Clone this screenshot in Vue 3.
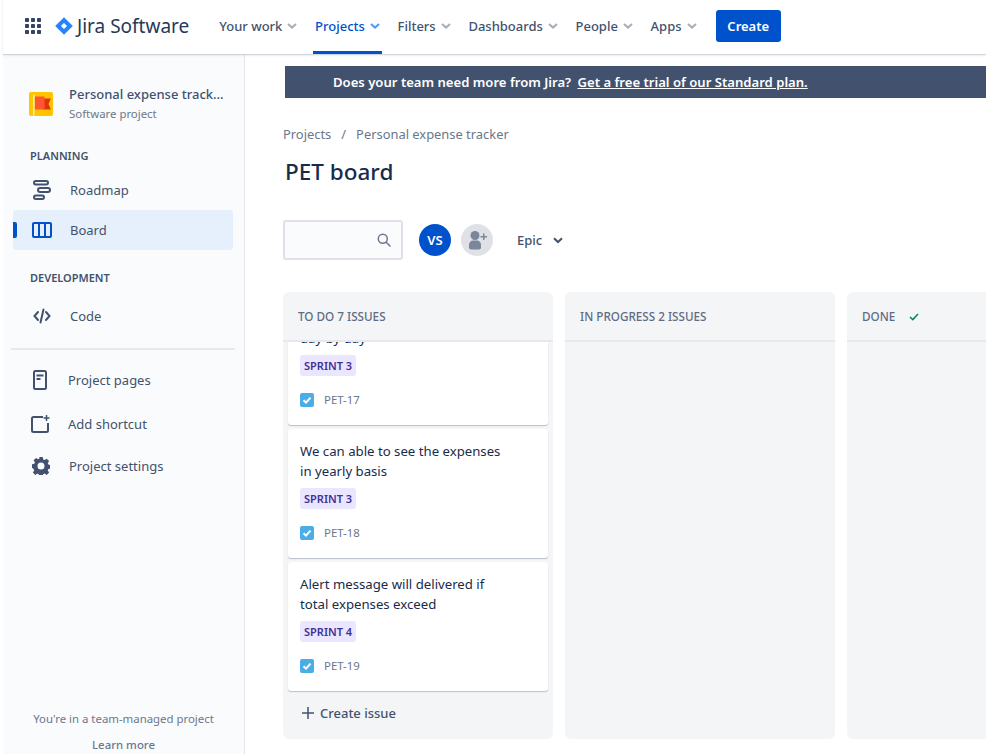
<template>
  <div class="page">
    <header class="topbar">
      <svg class="apps-icon" width="16" height="16" viewBox="0 0 16 16">
        <g fill="#344563">
          <template v-for="y in [0, 6, 12]" :key="y">
            <rect v-for="x in [0, 6, 12]" :key="x" :x="x" :y="y" width="4" height="4" rx="0.8" />
          </template>
        </g>
      </svg>
      <div class="logo">
        <svg width="18" height="18" viewBox="0 0 18 18">
          <path fill="#2684FF" d="M9 0.2 17.8 9 9 17.8 0.2 9Z" />
          <path fill="#fff" d="M9 5.9 12.1 9 9 12.1 5.9 9Z" />
        </svg>
        <span>Jira Software</span>
      </div>
      <nav class="nav">
        <a v-for="item in navItems" :key="item" class="nav-item" :class="{ active: item === 'Projects' }">
          {{ item }}
          <svg width="10" height="6" viewBox="0 0 10 6"><path d="M1 1 5 4.6 9 1" fill="none" stroke-width="2" /></svg>
        </a>
      </nav>
      <button class="create-btn">Create</button>
    </header>

    <div class="content">
      <aside class="sidebar">
        <div class="project">
          <svg width="24" height="24" viewBox="0 0 24 24">
            <rect width="24" height="24" rx="2" fill="#FFC400" />
            <rect x="4" y="2.500" width="1.500" height="21.500" fill="#DEEBE6" />
            <path fill="#DE350B" d="M14 6.500h8l-2.500 5.500 2.500 5.500H14Z" />
            <path fill="#FF5630" d="M6 4.500h9.500v13H6Z" />
          </svg>
          <div class="project-text">
            <div class="project-name">Personal expense track...</div>
            <div class="project-type">Software project</div>
          </div>
        </div>

        <div class="group-title planning">PLANNING</div>
        <a class="side-link roadmap">
          <svg width="20" height="20" viewBox="0 0 20 20" fill="none" stroke="#42526E" stroke-width="2">
            <rect x="1" y="1" width="14" height="3.500" rx="1.750" />
            <rect x="5" y="8" width="12" height="4" rx="2" />
            <rect x="1" y="15.500" width="10" height="3.500" rx="1.750" />
          </svg>
          <span>Roadmap</span>
        </a>
        <a class="side-link current">
          <svg width="20" height="16" viewBox="0 0 20 16" fill="none" stroke="#0052CC" stroke-width="2">
            <rect x="1" y="1" width="18" height="14" rx="1" />
            <path d="M7 1v14M13 1v14" />
          </svg>
          <span>Board</span>
        </a>

        <div class="group-title development">DEVELOPMENT</div>
        <a class="side-link code">
          <svg width="18" height="16" viewBox="0 0 18 16" fill="none" stroke="#42526E" stroke-width="2" stroke-linecap="round">
            <path d="M5 4 1.500 8 5 12M13 4l3.500 4-3.500 4M10.500 1.500 7.500 14.500" />
          </svg>
          <span>Code</span>
        </a>

        <div class="divider"></div>

        <a class="side-link small pages">
          <svg width="14" height="20" viewBox="0 0 14 20" fill="none">
            <rect x="1" y="1" width="12" height="18" rx="1.500" stroke="#42526E" stroke-width="2" />
            <path d="M3.500 4.500h7v2h-7ZM3.500 8h4v2h-4Z" fill="#42526E" />
          </svg>
          <span>Project pages</span>
        </a>
        <a class="side-link small shortcut">
          <svg width="19" height="19" viewBox="0 0 19 19" fill="none" stroke="#42526E" stroke-width="2">
            <path d="M12 2H2.500A1.500 1.500 0 0 0 1 3.500v12A1.500 1.500 0 0 0 2.500 17h13a1.500 1.500 0 0 0 1.500-1.500V8" />
            <path d="M15.500 0v6M12.500 3h6" stroke-width="1.500" />
          </svg>
          <span>Add shortcut</span>
        </a>
        <a class="side-link small settings">
          <svg width="18" height="18" viewBox="0 0 18 18">
            <path fill="#42526E" fill-rule="evenodd" d="M7.300 0h3.400l.5 2.400 1.400.6 2.100-1.300 2.400 2.400-1.300 2.100.6 1.400 2.400.5v3.400l-2.400.5-.6 1.400 1.300 2.100-2.400 2.400-2.100-1.300-1.400.6-.5 2.400H7.300l-.5-2.400-1.400-.6-2.100 1.300-2.400-2.400 1.300-2.100-.6-1.400L-.1 10.700V7.300l2.400-.5.6-1.400-1.300-2.100 2.400-2.400 2.100 1.300 1.400-.6ZM9 5.500a3.500 3.500 0 1 0 0 7 3.500 3.500 0 0 0 0-7Z" />
          </svg>
          <span>Project settings</span>
        </a>

        <div class="side-foot">
          <p>You're in a team-managed project</p>
          <a>Learn more</a>
        </div>
      </aside>

      <main class="main">
        <div class="banner">
          Does your team need more from Jira?
          <a>Get a free trial of our Standard plan.</a>
        </div>

        <div class="crumbs">
          <a>Projects</a><span class="slash">/</span><a>Personal expense tracker</a>
        </div>
        <h1>PET board</h1>

        <div class="filters">
          <div class="search">
            <svg width="14" height="14" viewBox="0 0 14 14" fill="none" stroke="#6B778C" stroke-width="1.500">
              <circle cx="5.800" cy="5.800" r="4.500" />
              <path d="M9.200 9.200 13 13" stroke-linecap="round" />
            </svg>
          </div>
          <div class="avatar">VS</div>
          <div class="avatar add">
            <svg width="22" height="22" viewBox="0 0 22 22" fill="#7A869A">
              <circle cx="9" cy="6.500" r="4.500" />
              <path d="M3 16c0-3 2-4.500 4-4.500h4c2 0 4 1.500 4 4.500v2.500a2 2 0 0 1-2 2H5a2 2 0 0 1-2-2Z" />
              <path d="M17 4.500h1.500V7H21v1.500h-2.500V11H17V8.500h-2.500V7H17Z" />
            </svg>
          </div>
          <div class="epic">
            Epic
            <svg width="10" height="7" viewBox="0 0 10 7"><path d="M1 1.200 5 5 9 1.200" fill="none" stroke="#42526E" stroke-width="2" /></svg>
          </div>
        </div>

        <section class="board">
          <div class="column">
            <div class="col-head">TO DO 7 ISSUES</div>
            <div class="cards">
              <article v-for="card in cards" :key="card.key" class="card">
                <p class="summary">{{ card.line1 }}<br />{{ card.line2 }}</p>
                <span class="tag">{{ card.sprint }}</span>
                <div class="issue-key">
                  <svg width="14" height="14" viewBox="0 0 14 14">
                    <rect width="14" height="14" rx="2" fill="#4BADE8" />
                    <path d="M3.500 7.200 6 9.600 10.500 4.600" fill="none" stroke="#fff" stroke-width="2" />
                  </svg>
                  <span>{{ card.key }}</span>
                </div>
              </article>
            </div>
            <div class="create-issue">
              <svg width="12" height="12" viewBox="0 0 12 12"><path d="M6 0v12M0 6h12" stroke="#42526E" stroke-width="1.500" /></svg>
              Create issue
            </div>
          </div>
          <div class="column">
            <div class="col-head">IN PROGRESS 2 ISSUES</div>
          </div>
          <div class="column">
            <div class="col-head">
              DONE
              <svg class="done-check" width="10" height="8" viewBox="0 0 10 8"><path d="M1 4 3.800 6.600 9 1" fill="none" stroke="#00875A" stroke-width="1.500" /></svg>
            </div>
          </div>
        </section>
      </main>
    </div>
  </div>
</template>

<script setup>
const navItems = ['Your work', 'Projects', 'Filters', 'Dashboards', 'People', 'Apps']

const cards = [
  { key: 'PET-17', sprint: 'SPRINT 3', line1: 'We can able to see the expenses', line2: 'day by day' },
  { key: 'PET-18', sprint: 'SPRINT 3', line1: 'We can able to see the expenses', line2: 'in yearly basis' },
  { key: 'PET-19', sprint: 'SPRINT 4', line1: 'Alert message will delivered if', line2: 'total expenses exceed' }
]
</script>

<style>
html, body {
  margin: 0;
  background: #fff;
  overflow: hidden;
}
</style>

<style scoped>
.page {
  width: 986px;
  height: 754px;
  box-sizing: border-box;
  padding-left: 3px;
  overflow: hidden;
  display: flex;
  flex-direction: column;
  font-family: "Noto Sans", "Open Sans", sans-serif;
  font-size: 13px;
  color: #42526E;
}

.topbar {
  position: relative;
  z-index: 2;
  flex: 0 0 54px;
  display: flex;
  align-items: center;
  padding-left: 22px;
  background: #fff;
  box-shadow: 0 1px 1px rgba(9, 30, 66, 0.14), 0 2px 3px rgba(9, 30, 66, 0.05);
}

.apps-icon {
  margin-bottom: 2px;
}

.logo {
  display: flex;
  align-items: center;
  gap: 4px;
  margin-left: 14px;
  margin-bottom: 2px;
  font-size: 19px;
  color: #253858;
}

.nav {
  display: flex;
  height: 100%;
  margin-left: 28px;
}

.nav-item {
  display: flex;
  align-items: center;
  gap: 5px;
  padding: 0 2px;
  margin-right: 13.700px;
  box-sizing: border-box;
  border-bottom: 3px solid transparent;
  font-weight: 500;
  color: #42526E;
  stroke: #A5ADBA;
}

.nav-item.active {
  color: #0052CC;
  stroke: #4C9AFF;
  border-bottom-color: #0052CC;
}

.create-btn {
  width: 65px;
  height: 32px;
  margin-left: 3.500px;
  margin-bottom: 2px;
  border: none;
  border-radius: 3px;
  background: #0052CC;
  color: #fff;
  font: 600 13px "Noto Sans", sans-serif;
}

.content {
  flex: 1;
  min-height: 0;
  display: flex;
}

.sidebar {
  flex: 0 0 242px;
  box-sizing: border-box;
  display: flex;
  flex-direction: column;
  background: #FAFBFC;
  border-right: 1px solid #E4E6EA;
}

.project {
  display: flex;
  align-items: center;
  gap: 16px;
  margin: 30px 0 0 26px;
  height: 40px;
}

.project-name {
  font-weight: 500;
  line-height: 20px;
}

.project-type {
  font-size: 11.400px;
  line-height: 20px;
  color: #6B778C;
}

.group-title {
  margin-left: 27px;
  font-size: 11px;
  font-weight: 600;
  line-height: 16px;
}

.planning {
  margin-top: 24px;
}

.development {
  margin-top: 20px;
}

.side-link {
  display: flex;
  align-items: center;
  height: 40px;
  margin: 0 11px 0 10px;
  padding-left: 20px;
  gap: 18px;
  border-radius: 3px;
}

.side-link svg {
  flex: none;
}

.roadmap {
  margin-top: 6px;
  gap: 17px;
}

.current {
  position: relative;
  background: #E6F0FC;
  color: #42526E;
  padding-left: 19px;
}

.current::before {
  content: "";
  position: absolute;
  left: 0;
  top: 12px;
  width: 4px;
  height: 16px;
  border-radius: 0 2px 2px 0;
  background: #0052CC;
}

.code {
  margin-top: 10px;
  gap: 19px;
}

.divider {
  height: 2px;
  margin: 12px 9px 0 8px;
  background: #E6E8EC;
}

.small {
  height: 44px;
}

.pages {
  margin-top: 8px;
  gap: 21px;
}

.shortcut {
  padding-left: 18px;
  gap: 18px;
}

.settings {
  height: 40px;
  padding-left: 19px;
  gap: 19px;
}

.side-foot {
  margin-top: auto;
  text-align: center;
  font-size: 11.400px;
  color: #6B778C;
}

.side-foot p {
  margin: 0 0 10px;
  line-height: 16px;
}

.side-foot a {
  display: block;
  line-height: 16px;
  margin-bottom: 1px;
  font-weight: 500;
}

.main {
  flex: 1;
  min-width: 0;
  padding: 12px 0 0 38px;
  overflow: hidden;
}

.banner {
  width: 760px;
  height: 32px;
  margin-left: 2px;
  padding-left: 48px;
  line-height: 32px;
  box-sizing: border-box;
  background: #42526E;
  color: #fff;
  font-size: 13.100px;
  font-weight: 600;
  white-space: nowrap;
}

.banner a {
  margin-left: 3px;
  text-decoration: underline;
}

.crumbs {
  margin-top: 26px;
  line-height: 20px;
  font-size: 12.900px;
  color: #6B778C;
}

.slash {
  margin: 0 10px;
}

h1 {
  margin: 12px 0 0 2px;
  font-size: 22.500px;
  line-height: 32px;
  font-weight: 500;
  color: #172B4D;
}

.filters {
  display: flex;
  align-items: center;
  margin-top: 32px;
  height: 40px;
}

.search {
  width: 120px;
  height: 40px;
  box-sizing: border-box;
  border: 2px solid #DFE1E6;
  border-radius: 3px;
  background: #FAFBFC;
  display: flex;
  align-items: center;
  justify-content: flex-end;
  padding-right: 10px;
}

.avatar {
  width: 32px;
  height: 32px;
  margin-left: 16px;
  border-radius: 50%;
  background: #0052CC;
  color: #fff;
  font-weight: 600;
  display: flex;
  align-items: center;
  justify-content: center;
}

.avatar.add {
  margin-left: 10px;
  background: #DFE1E6;
}

.epic {
  display: flex;
  align-items: center;
  gap: 11px;
  margin-left: 24px;
  font-weight: 500;
}

.board {
  display: flex;
  gap: 12px;
  margin-top: 32px;
  width: 830px;
}

.column {
  flex: 0 0 270px;
  height: 447px;
  display: flex;
  flex-direction: column;
  border-radius: 6px;
  background: #F4F5F7;
}

.col-head {
  flex: 0 0 50px;
  box-sizing: border-box;
  display: flex;
  align-items: center;
  padding: 0 0 0 15px;
  font-size: 11.700px;
  font-weight: 500;
  color: #5E6C84;
  border-bottom: 2px solid #E6E8EC;
}

.done-check {
  margin-left: 14px;
  margin-top: 2px;
}

.cards {
  flex: 1;
  min-height: 0;
  overflow: hidden;
  padding: 0 5px;
}

.card {
  height: 129px;
  box-sizing: border-box;
  margin-bottom: 4px;
  padding: 12px 12px 0;
  background: #fff;
  border-radius: 3px;
  box-shadow: 0 1px 1px rgba(9, 30, 66, 0.25);
  color: #172B4D;
}

.card:first-child {
  margin-top: -46px;
}

.summary {
  margin: 0;
  line-height: 20px;
  font-size: 13.200px;
}

.tag {
  display: inline-block;
  margin-top: 7px;
  padding: 0 4px;
  line-height: 21px;
  border-radius: 3px;
  background: #EAE6FF;
  color: #403294;
  font-size: 11px;
  font-weight: 600;
}

.issue-key {
  display: flex;
  align-items: center;
  gap: 10px;
  margin-top: 16px;
  font-size: 11.400px;
  color: #6B778C;
}

.create-issue {
  flex: 0 0 44px;
  box-sizing: border-box;
  padding: 0 0 8px 19px;
  display: flex;
  align-items: center;
  gap: 6px;
  font-weight: 500;
}
</style>
